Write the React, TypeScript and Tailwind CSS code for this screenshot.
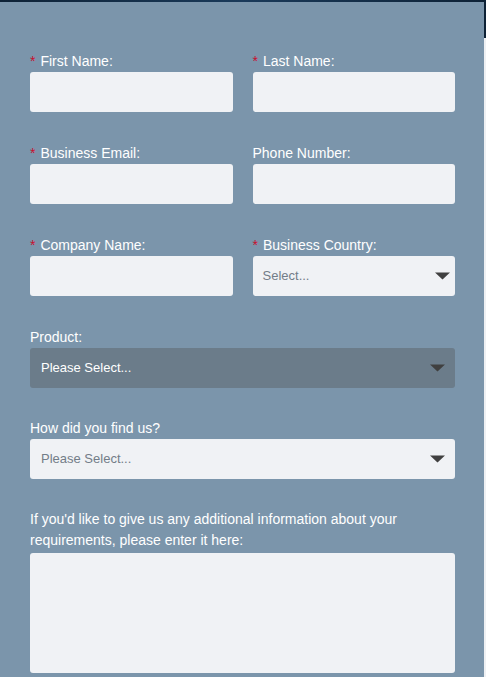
import React from 'react'

// Simple enquiry form on a slate-blue panel

const Arrow = () => (
  <svg width="15" height="8" viewBox="0 0 15 8" className="shrink-0">
    <path d="M0 0.5 L15 0.5 L7.5 7.5 Z" fill="#404040" />
  </svg>
)

const Label = ({ text, required }: { text: string; required?: boolean }) => (
  <label className="block text-[14px] leading-[21px] text-white">
    {required && <span className="text-[#c8102e] mr-[5px]">*</span>}
    {text}
  </label>
)

const TextField = ({ label, required }: { label: string; required?: boolean }) => (
  <div className="flex-1">
    <Label text={label} required={required} />
    <input
      type="text"
      className="block w-full h-10 rounded-[3px] bg-[#f0f2f5] outline-none px-[10px] text-[14px]"
    />
  </div>
)

const SelectField = ({
  label,
  placeholder,
  required,
  dark,
  half,
}: {
  label: string
  placeholder: string
  required?: boolean
  dark?: boolean
  half?: boolean
}) => (
  <div className="flex-1">
    <Label text={label} required={required} />
    <div
      className={
        dark
          ? 'flex items-center justify-between h-10 rounded-[3px] bg-[#6b7c8a] pl-[11px] pr-[10px]'
          : half
            ? 'flex items-center justify-between h-10 rounded-[3px] bg-[#f0f2f5] pl-[10px] pr-[5px]'
            : 'flex items-center justify-between h-10 rounded-[3px] bg-[#f0f2f5] pl-[11px] pr-[10px]'
      }
    >
      <span className={dark ? 'text-[13px] text-white' : 'text-[13px] text-[#737d88]'}>
        {placeholder}
      </span>
      <Arrow />
    </div>
  </div>
)

export default function App() {
  return (
    <div
      className="flex w-[486px] h-[677px] overflow-hidden bg-[#7b95ab]"
      style={{ fontFamily: '"Liberation Sans", Arial, sans-serif' }}
    >
      <div className="flex-1 flex flex-col">
        {/* Top edge of the hero image above */}
        <div className="h-[2px] bg-gradient-to-r from-[#0e2236] via-[#1a3a5a] to-[#0e2236]" />

        <div className="flex flex-col pt-[49px] pl-[30px] pr-[29px]">
          <div className="flex gap-5 mb-[31px]">
            <TextField label="First Name:" required />
            <TextField label="Last Name:" required />
          </div>

          <div className="flex gap-5 mb-[31px]">
            <TextField label="Business Email:" required />
            <TextField label="Phone Number:" />
          </div>

          <div className="flex gap-5 mb-[31px]">
            <TextField label="Company Name:" required />
            <SelectField label="Business Country:" placeholder="Select..." required half />
          </div>

          <div className="mb-[30px]">
            <SelectField label="Product:" placeholder="Please Select..." dark />
          </div>

          <div className="mb-[30px]">
            <SelectField label="How did you find us?" placeholder="Please Select..." />
          </div>

          <div>
            <label className="block text-[14px] leading-[21px] text-white">
              If you'd like to give us any additional information about your requirements, please enter it here:
            </label>
            <textarea className="block w-full h-[120px] mt-[2px] rounded-[3px] bg-[#f0f2f5] outline-none resize-none p-[10px] text-[14px]" />
          </div>
        </div>
      </div>

      {/* Page edge on the right */}
      <div className="w-[2px] flex flex-col">
        <div className="h-[38px] bg-[#0e2236]" />
        <div className="flex-1 bg-[#eef0f3]" />
      </div>
    </div>
  )
}
